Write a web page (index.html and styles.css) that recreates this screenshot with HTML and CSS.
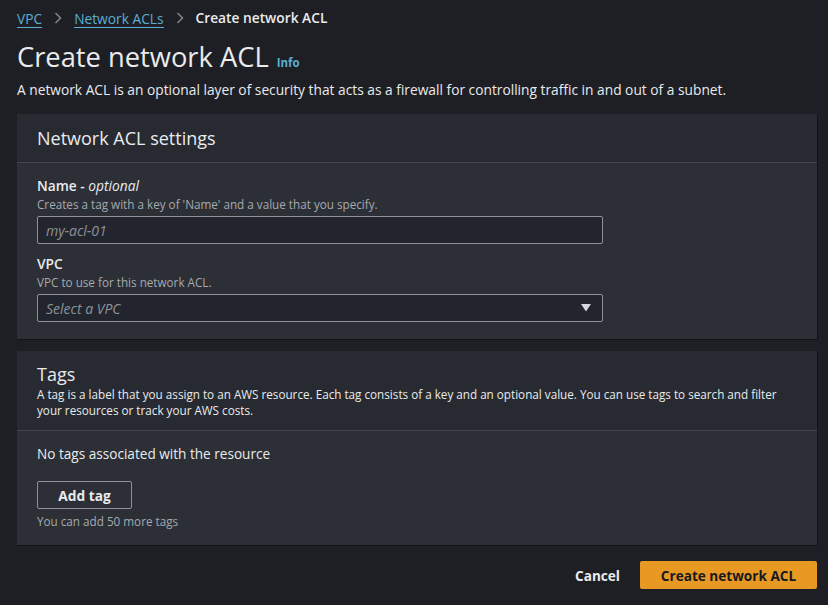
FILE: index.html
```html
<!DOCTYPE html>
<html lang="en">
<head>
<meta charset="utf-8">
<title>Create network ACL</title>
<link rel="stylesheet" href="styles.css">
</head>
<body>
<main class="page">
  <nav class="crumbs">
    <a class="crumb-link" href="#">VPC</a>
    <svg class="chev" width="8" height="12" viewBox="0 0 8 12"><polyline points="1.5,1 6.5,6 1.5,11" fill="none" stroke="#7d8289" stroke-width="1.6"/></svg>
    <a class="crumb-link" href="#">Network ACLs</a>
    <svg class="chev" width="8" height="12" viewBox="0 0 8 12"><polyline points="1.5,1 6.5,6 1.5,11" fill="none" stroke="#7d8289" stroke-width="1.6"/></svg>
    <span class="crumb-current">Create network ACL</span>
  </nav>

  <header class="page-head">
    <h1 class="title">Create network ACL <a class="info" href="#">Info</a></h1>
    <p class="lead">A network ACL is an optional layer of security that acts as a firewall for controlling traffic in and out of a subnet.</p>
  </header>

  <section class="panel">
    <div class="panel-head">
      <h2 class="panel-title">Network ACL settings</h2>
    </div>
    <div class="panel-body">
      <div class="field">
        <div class="label">Name - <i>optional</i></div>
        <div class="desc">Creates a tag with a key of 'Name' and a value that you specify.</div>
        <div class="input"><span class="placeholder">my-acl-01</span></div>
      </div>
      <div class="field">
        <div class="label">VPC</div>
        <div class="desc">VPC to use for this network ACL.</div>
        <div class="input select"><span class="placeholder">Select a VPC</span>
          <svg class="caret" width="10" height="8" viewBox="0 0 10 8"><polygon points="0,0 10,0 5,7.5" fill="#d5d9de"/></svg>
        </div>
      </div>
    </div>
  </section>

  <section class="panel">
    <div class="panel-head tags-head">
      <h2 class="panel-title">Tags</h2>
      <p class="panel-desc">A tag is a label that you assign to an AWS resource. Each tag consists of a key and an optional value. You can use tags to search and filter your resources or track your AWS costs.</p>
    </div>
    <div class="panel-body tags-body">
      <div class="empty">No tags associated with the resource</div>
      <button class="btn-normal">Add tag</button>
      <div class="hint">You can add 50 more tags</div>
    </div>
  </section>

  <div class="actions">
    <button class="btn-link">Cancel</button>
    <button class="btn-primary">Create network ACL</button>
  </div>
</main>
</body>
</html>
```

FILE: styles.css
```css
* { box-sizing: border-box; }

html, body {
  margin: 0;
  padding: 0;
  background: #1e1f24;
}

body {
  font-family: "Open Sans", "Noto Sans", sans-serif;
  color: #d1d5db;
  font-size: 13.6px;
}

.page {
  padding: 8px 11px 0 17px;
  display: flex;
  flex-direction: column;
}

.crumbs {
  display: flex;
  align-items: center;
  gap: 12px;
  height: 20px;
  font-size: 13.75px;
  line-height: 20px;
}

.crumb-link {
  color: #5aaed3;
  text-decoration: none;
  border-bottom: 1px solid #5aaed3;
  line-height: 17px;
  padding-top: 2px;
}

.chev { display: block; }

.crumb-current {
  color: #e9ebed;
  font-weight: 600;
}

.page-head {
  margin-top: 12px;
}

.title {
  margin: 0;
  font-size: 27.3px;
  font-weight: 400;
  line-height: 34px;
  color: #e9ebed;
  display: flex;
  align-items: baseline;
  gap: 2px;
}

.info {
  color: #5aaed3;
  font-size: 11.5px;
  font-weight: 700;
  text-decoration: none;
  margin-left: 6px;
}

.lead {
  margin: 0;
  font-size: 13.75px;
  line-height: 20px;
  color: #e9ebed;
}

.panel {
  margin-top: 14px;
  background: #2c2f35;
  box-shadow: 1px 1px 0 #111216;
}

.panel + .panel { margin-top: 12px; }

.panel-head {
  background: #272a31;
  border-bottom: 1px solid #41464e;
  height: 49px;
  padding: 0 20px;
  display: flex;
  align-items: center;
}

.panel-title {
  margin: 0;
  font-size: 18px;
  font-weight: 500;
  line-height: 22px;
  color: #e9ebed;
}

.panel-body {
  padding: 13px 20px 17px;
  display: flex;
  flex-direction: column;
}

.field + .field { margin-top: 10px; }

.label {
  font-size: 13.75px;
  font-weight: 600;
  line-height: 20px;
  color: #e9ebed;
}

.label i { font-weight: 500; }

.desc {
  font-size: 11.7px;
  line-height: 16px;
  color: #a4a9b0;
}

.input {
  margin-top: 4px;
  width: 566px;
  height: 28px;
  background: #22252d;
  border: 1px solid #8d9399;
  border-radius: 2px;
  padding: 0 8px;
  display: flex;
  align-items: center;
  justify-content: space-between;
}

.placeholder {
  font-style: italic;
  color: #8d9399;
  font-size: 14px;
}

.select { padding-right: 11px; }

.caret { display: block; }

.tags-head {
  height: auto;
  padding: 12px 20px 12px;
  display: flex;
  flex-direction: column;
  align-items: flex-start;
}

.panel-desc {
  margin: 1px 0 0;
  font-size: 11.7px;
  line-height: 16px;
  color: #e9ebed;
}

.tags-body { align-items: flex-start; padding-bottom: 16px; }

.empty {
  font-size: 13.6px;
  line-height: 20px;
  color: #e9ebed;
}

.btn-normal {
  margin-top: 17px;
  height: 28px;
  width: 95px;
  background: transparent;
  border: 1px solid #8d9399;
  border-radius: 2px;
  color: #e9ebed;
  font-family: inherit;
  font-size: 13.75px;
  font-weight: 700;
  padding: 0;
}

.hint {
  margin-top: 4px;
  font-size: 11.7px;
  line-height: 16px;
  color: #a4a9b0;
}

.actions {
  margin-top: 16px;
  display: flex;
  justify-content: flex-end;
  align-items: center;
  gap: 20px;
}

.btn-link {
  background: none;
  border: none;
  color: #e9ebed;
  font-family: inherit;
  font-size: 13.6px;
  font-weight: 700;
  padding: 0;
}

.btn-primary {
  height: 28px;
  width: 177px;
  background: #e89924;
  border: none;
  border-radius: 2px;
  color: #16191f;
  font-family: inherit;
  font-size: 13.6px;
  font-weight: 700;
  padding: 0;
}
```
